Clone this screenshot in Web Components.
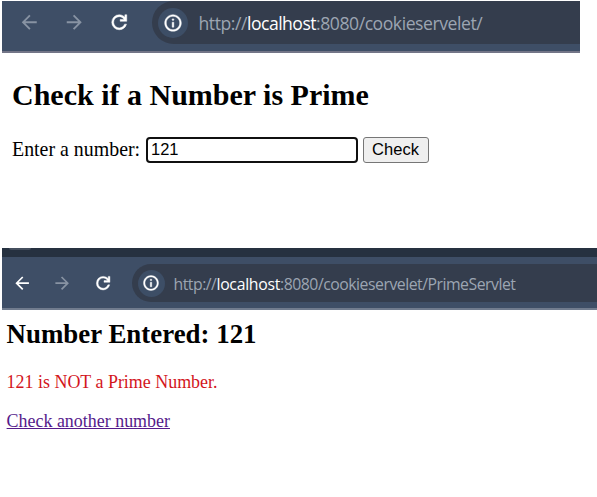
<!DOCTYPE html>
<html lang="en">
<head>
<meta charset="utf-8">
<title>Prime number check</title>
<style>
body { margin: 0; background: #fff; color: #000; font-family: "Liberation Serif", "Times New Roman", serif; }
</style>
</head>
<body>
<browser-shot class="form">
  <browser-bar slot="bar" path=":8080/cookieservelet/"></browser-bar>
  <prime-form value="121"></prime-form>
</browser-shot>
<browser-shot class="result">
  <browser-bar slot="bar" compact can-go-back path=":8080/cookieservelet/PrimeServlet"></browser-bar>
  <prime-result number="121"></prime-result>
</browser-shot>
<script>
class BrowserShot extends HTMLElement {
  constructor() {
    super();
    this.attachShadow({ mode: 'open' }).innerHTML = `
      <style>
        :host { display: block; box-sizing: border-box; padding: 0 0 0 2px; }
        :host(.form) { height: 248px; padding: 1px 17px 0 2px; }
        :host(.result) { height: 249px; overflow: hidden; }
      </style>
      <slot name="bar"></slot><slot></slot>`;
  }
}
customElements.define('browser-shot', BrowserShot);

class BrowserBar extends HTMLElement {
  connectedCallback() {
    this.attachShadow({ mode: 'open' }).innerHTML = `
      <style>
        :host { display: block; --icon: 22.5px; }
        :host([compact]) { --icon: 20.3px; }
        .tabs { display: none; height: 9px; background: #263140; overflow: hidden; }
        .tabs i { display: block; width: 22px; height: 1.5px; margin-left: 7px; background: #454f5e; border-radius: 0 0 8px 8px; }
        .bar { display: flex; box-sizing: border-box; height: 52px; align-items: flex-start; background: #3e4e66; border-bottom: 2px solid #737587; }
        nav { display: flex; gap: 22.5px; padding: 10.3px 0 0 16.4px; width: 150px; box-sizing: border-box; }
        svg { display: block; flex: none; width: var(--icon); height: var(--icon); fill: #fff; }
        .off { fill: #8893a3; }
        .bold { stroke: #fff; stroke-width: .5; }
        .url { flex: 1; min-width: 0; display: flex; align-items: center; height: 43px; background: #343d4d; border-radius: 22px 0 0 22px; font: 17.6px "Open Sans", "Noto Sans", sans-serif; color: #9ca5b2; white-space: pre; }
        .info { display: flex; flex: none; align-items: center; justify-content: center; width: 30px; height: 30px; margin: 0 10.5px 0 6px; border-radius: 50%; background: #3d4e66; }
        .info svg { width: 20px; height: 20px; }
        span, b { padding-top: 1px; }
        span { letter-spacing: -.45px; }
        b { font-weight: 400; color: #fff; letter-spacing: -.52px; }
        :host([compact]) .tabs { display: block; }
        :host([compact]) .bar { height: 53px; padding-top: 7px; border-color: #717c8e; }
        :host([compact]) nav { width: 130px; padding: 8.8px 0 0 10.3px; gap: 19.9px; }
        :host([compact]) .url { height: 38px; border-radius: 19px 0 0 19px; font-size: 15.8px; }
        :host([compact]) .info { width: 27px; height: 27px; margin: 0 9px 0 5.5px; }
        :host([compact]) .info svg { width: 18px; height: 18px; }
        :host([compact]) span { letter-spacing: -.49px; }
        :host([compact]) b { letter-spacing: -.28px; }
      </style>
      <div class="tabs"><i></i></div>
      <div class="bar">
        <nav>
          <svg class="${this.hasAttribute('can-go-back') ? '' : 'off'}" viewBox="0 0 24 24"><path d="M20 11H7.83l5.59-5.59L12 4l-8 8 8 8 1.41-1.41L7.83 13H20v-2z"/></svg>
          <svg class="off" viewBox="0 0 24 24"><path d="M12 4l-1.41 1.41L16.17 11H4v2h12.17l-5.58 5.59L12 20l8-8z"/></svg>
          <svg class="bold" viewBox="0 0 24 24"><path d="M12 20q-3.35 0-5.675-2.325T4 12t2.325-5.675T12 4q1.725 0 3.3.7125T18 6.75V4h2v7h-7V9h4.2q-.8-1.4-2.1875-2.2T12 6Q9.5 6 7.750 7.750T6 12t1.750 4.250T12 18q1.925 0 3.475-1.1T17.650 14h2.1q-.7 2.650-2.850 4.325T12 20z"/></svg>
        </nav>
        <div class="url"><div class="info"><svg class="bold" viewBox="0 0 24 24"><path d="M11 17h2v-6h-2v6zM12 9q.5 0 .8-.3T13.100 7.900t-.3-.8T12 6.800t-.8.3-.3.8.3.8.8.3zM12 22C6.480 22 2 17.520 2 12S6.480 2 12 2s10 4.480 10 10-4.480 10-10 10zm0-2c4.420 0 8-3.580 8-8s-3.580-8-8-8-8 3.580-8 8 3.580 8 8 8z"/></svg></div><span>http://</span><b>localhost</b><span>${this.getAttribute('path')}</span></div>
      </div>`;
  }
}
customElements.define('browser-bar', BrowserBar);

class PrimeForm extends HTMLElement {
  connectedCallback() {
    this.attachShadow({ mode: 'open' }).innerHTML = `
      <style>
        :host { display: block; padding: 25px 0 0 10px; }
        h2 { margin: 0; font-size: 30px; line-height: 34px; white-space: nowrap; }
        form { display: flex; align-items: center; margin-top: 25px; height: 26px; font-size: 19.9px; white-space: nowrap; }
        label { line-height: 24px; width: 134px; padding-bottom: 3px; }
        input, button { box-sizing: border-box; height: 26px; font: 16.5px "Liberation Sans", Arial, sans-serif; color: #000; outline: none; margin: 0; }
        input { width: 212px; padding: 0 3px 1px; border: 2px solid #101010; border-radius: 4px; background: #fff; }
        button { width: 66px; margin-left: 5px; padding: 0 1px 1px 0; border: 1px solid #767676; border-radius: 3px; background: #efefef; }
      </style>
      <h2>Check if a Number is Prime</h2>
      <form><label for="n">Enter a number:</label><input id="n" type="text" value="${this.getAttribute('value')}"><button type="button">Check</button></form>`;
  }
}
customElements.define('prime-form', PrimeForm);

class PrimeResult extends HTMLElement {
  connectedCallback() {
    const n = this.getAttribute('number');
    this.attachShadow({ mode: 'open' }).innerHTML = `
      <style>
        :host { display: block; padding: 9px 0 0 4.6px; white-space: nowrap; font-size: 17.95px; line-height: 21px; }
        h2 { margin: 0; font-size: 26.9px; line-height: 31px; }
        p { margin: 22px 0 18px; color: #d3151c; }
        a { color: #551a8b; text-decoration: underline; }
      </style>
      <h2>Number Entered: ${n}</h2>
      <p>${n} is NOT a Prime Number.</p>
      <a href="#">Check another number</a>`;
  }
}
customElements.define('prime-result', PrimeResult);
</script>
</body>
</html>
